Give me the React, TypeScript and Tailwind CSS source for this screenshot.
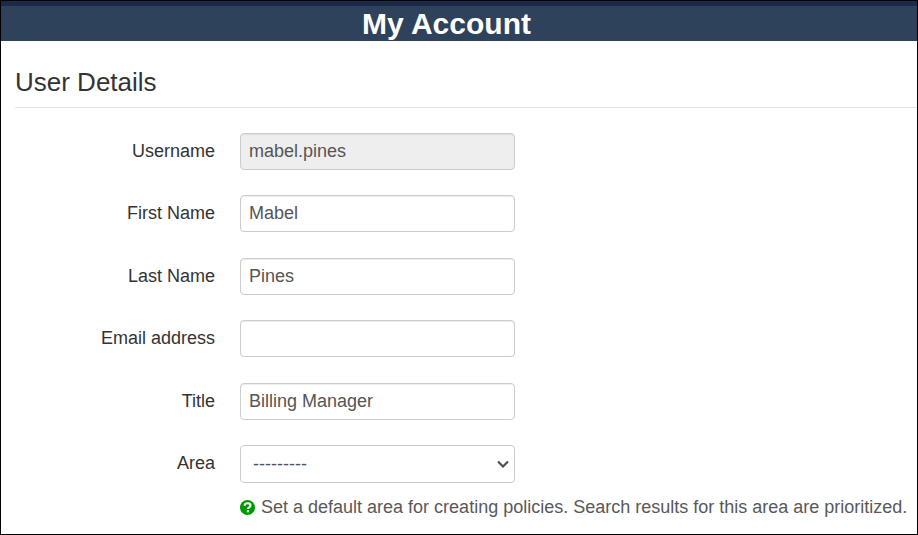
import type { ReactNode } from "react";

const control =
  "block w-[275px] rounded-[4px] border border-[#ccc] text-[18px] leading-[25px] text-[#555]";

function Row({ id, label, children }: { id: string; label: string; children: ReactNode }) {
  return (
    <div className="mb-[25px] flex items-start gap-[25px] even:mb-[26px] last:even:mb-0">
      <label htmlFor={id} className="w-[200px] shrink-0 pt-[6px] text-right text-[18px] leading-[25px] text-[#333]">
        {label}
      </label>
      <div className="min-w-0 flex-1">{children}</div>
    </div>
  );
}

const fields = [
  { id: "username", label: "Username", value: "mabel.pines", locked: true },
  { id: "first-name", label: "First Name", value: "Mabel", locked: false },
  { id: "last-name", label: "Last Name", value: "Pines", locked: false },
  { id: "email", label: "Email address", value: "", locked: false },
  { id: "title", label: "Title", value: "Billing Manager", locked: false },
];

export default function App() {
  return (
    <div className="flex min-h-screen flex-col border border-black bg-white font-['Liberation_Sans',Arial,sans-serif]">
      <header className="border-t-[5px] border-[#182c49] bg-[#2f425b] pr-[25px] text-center text-white">
        <h1 className="text-[30px] leading-[35px] font-bold">My Account</h1>
      </header>
      <main className="pl-[14px]">
        <h2 className="border-b border-[#e5e5e5] pt-[16px] text-[26px] leading-[50px] text-[#333]">User Details</h2>
        <form className="pt-[25px]">
          {fields.map((f) => (
            <Row key={f.id} id={f.id} label={f.label}>
              <input
                id={f.id}
                type="text"
                defaultValue={f.value}
                readOnly={f.locked}
                className={`${control} h-[37px] px-2 shadow-[inset_0_1px_1px_rgba(0,0,0,0.075)] ${f.locked ? "bg-[#eee]" : "bg-white"}`}
              />
            </Row>
          ))}
          <Row id="area" label="Area">
            <div className="relative w-[275px]">
              <select
                id="area"
                aria-describedby="area-help"
                className={`${control} h-[38px] appearance-none bg-white pr-6 pl-3`}
              >
                <option>---------</option>
              </select>
              <svg
                viewBox="0 0 12 8"
                className="pointer-events-none absolute inset-y-0 right-[6px] my-auto h-2 w-3"
                aria-hidden="true"
              >
                <path d="M1 1.500l5 5 5-5" fill="none" stroke="#505050" strokeWidth="2.200" />
              </svg>
            </div>
            <p id="area-help" className="mt-[12px] flex items-center gap-[6px] text-[18px] leading-[25px] text-[#595959]">
              <svg viewBox="0 0 16 16" className="size-[15px] shrink-0" aria-hidden="true">
                <circle cx="8" cy="8" r="8" fill="#090" />
                <path d="M4.900 6C5.200 4.200 6.400 3.500 8.100 3.500c1.800 0 3 .9 3 2.400 0 2.100-2.600 1.900-2.600 3.700" fill="none" stroke="#fff" strokeWidth="2.300" />
                <path d="M7.300 10.800h2.400v2.300H7.300z" fill="#fff" />
              </svg>
              <span>Set a default area for creating policies. Search results for this area are prioritized.</span>
            </p>
          </Row>
        </form>
      </main>
    </div>
  );
}
